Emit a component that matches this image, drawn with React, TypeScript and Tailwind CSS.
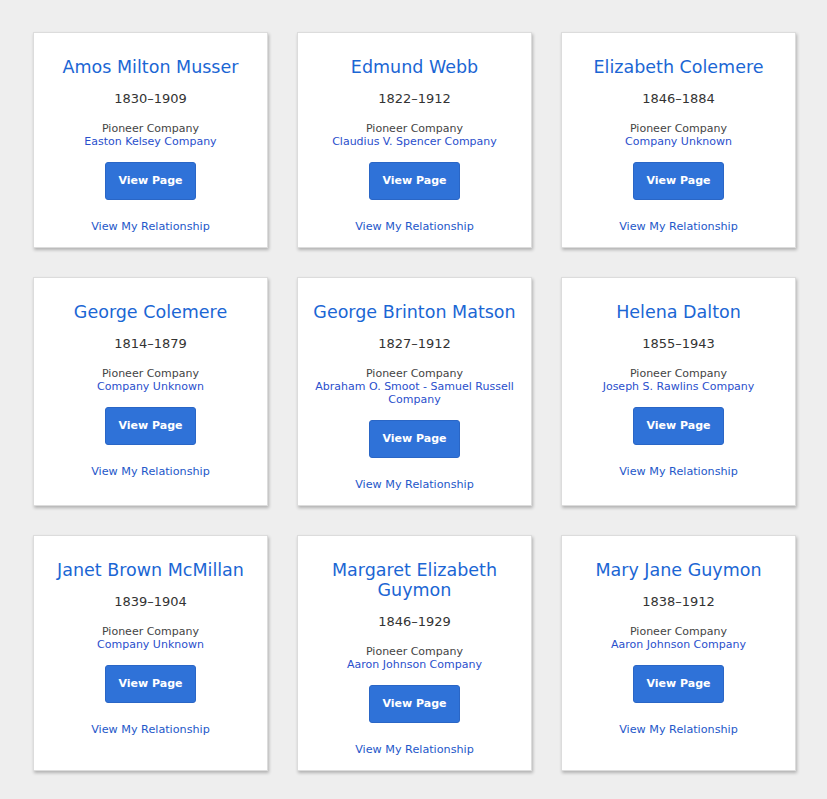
const pioneers = [
  { name: "Amos Milton Musser", years: "1830–1909", company: "Easton Kelsey Company" },
  { name: "Edmund Webb", years: "1822–1912", company: "Claudius V. Spencer Company" },
  { name: "Elizabeth Colemere", years: "1846–1884", company: "Company Unknown" },
  { name: "George Colemere", years: "1814–1879", company: "Company Unknown" },
  { name: "George Brinton Matson", years: "1827–1912", company: "Abraham O. Smoot - Samuel Russell Company" },
  { name: "Helena Dalton", years: "1855–1943", company: "Joseph S. Rawlins Company" },
  { name: "Janet Brown McMillan", years: "1839–1904", company: "Company Unknown" },
  { name: "Margaret Elizabeth Guymon", years: "1846–1929", company: "Aaron Johnson Company" },
  { name: "Mary Jane Guymon", years: "1838–1912", company: "Aaron Johnson Company" },
];

function PioneerCard({ name, years, company }: { name: string; years: string; company: string }) {
  return (
    <div className="bg-white border border-[#dcdcdc] shadow-[1px_2px_3px_rgba(0,0,0,0.25)] px-3 pt-[24px] pb-[12px] flex flex-col items-center text-center">
      <h2 className="text-[17.5px] leading-[20px] text-[#1b66d4]">{name}</h2>
      <div className="mt-[14px] text-[13px] leading-[16px] text-[#333]">{years}</div>
      <div className="mt-[15px] text-[11px] leading-[13px] text-[#444]">Pioneer Company</div>
      <a href="#" className="text-[11px] leading-[13px] text-[#2a4fcc]">{company}</a>
      <button className="mt-[14px] w-[91px] h-[38px] rounded-[3px] bg-[#2f72d8] border border-[#2a66c6] text-white text-[11px] font-bold">
        View Page
      </button>
      <a href="#" className="mt-[19px] text-[11.2px] leading-[16px] text-[#2457c9]">View My Relationship</a>
    </div>
  );
}

export default function App() {
  return (
    <div className="min-h-screen bg-[#eeeeee] pl-[33px] pr-[31px] pt-[32px] pb-8" style={{ fontFamily: '"DejaVu Sans", Verdana, sans-serif' }}>
      <div className="grid grid-cols-3 gap-[29px]">
        {pioneers.map((p) => (
          <PioneerCard key={p.name} {...p} />
        ))}
      </div>
    </div>
  );
}
